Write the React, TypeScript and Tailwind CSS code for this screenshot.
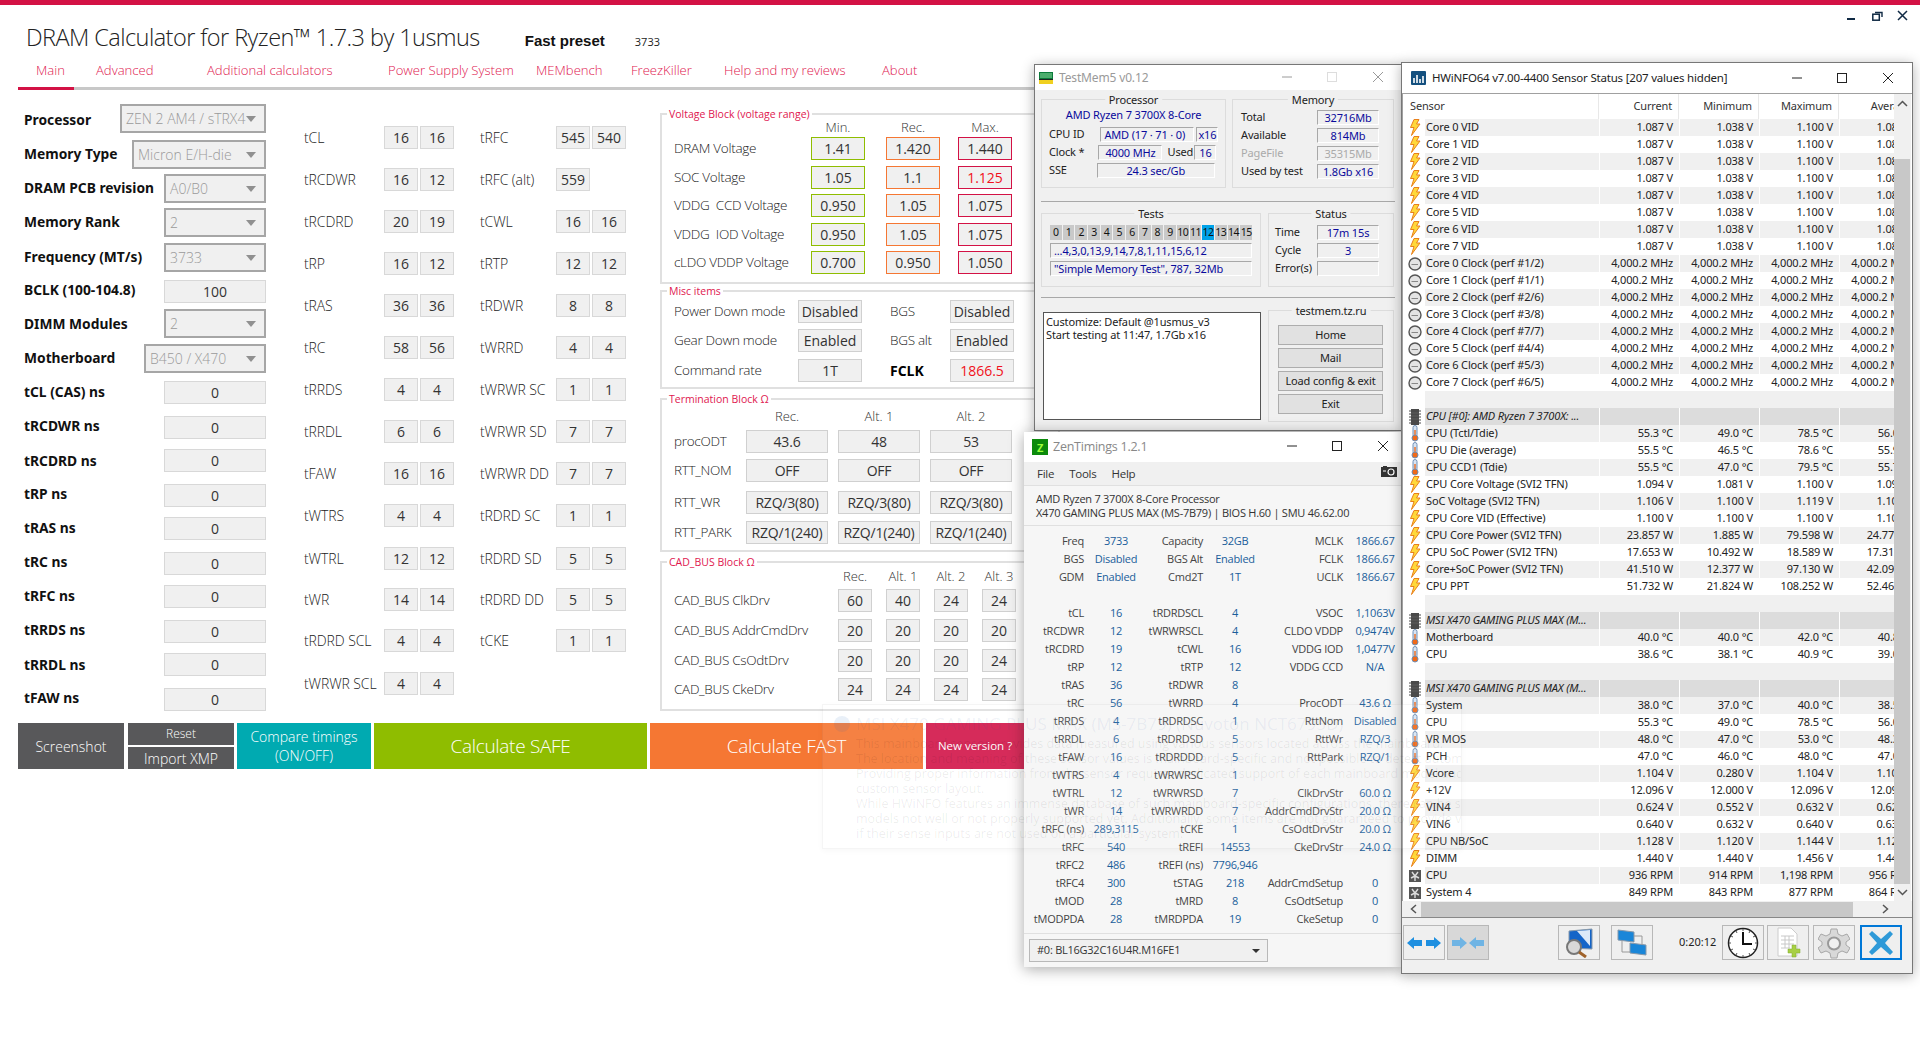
import React from "react";

const UI = "font-['Open_Sans','Noto_Sans',sans-serif]";

function Sel({ w, children }: { w: string; children: string }) {
  return (
    <div className={`h-[29px] ${w} flex items-center justify-between border-2 border-[#a6a6a6] bg-[#f0f0f0] pl-[4px] pr-[8px] text-[14px] text-[#9a9a9a] font-light`}>
      <span className="whitespace-nowrap">{children}</span>
      <span className="w-0 h-0 border-l-[5px] border-r-[5px] border-t-[6px] border-l-transparent border-r-transparent border-t-[#909090]" />
    </div>
  );
}

function Inp({ children }: { children: string }) {
  return (
    <div className="h-[23px] w-[102px] flex items-center justify-center border border-[#d8d8d8] bg-[#f0f0f0] text-[14px] text-[#333]">
      {children}
    </div>
  );
}

const leftRows: { label: string; type: "s" | "i"; value: string; w: string; mt: string; lmt: string }[] = [
  { label: "Processor", type: "s", value: "ZEN 2 AM4 / sTRX4", w: "w-[146px]", mt: "mt-0", lmt: "translate-y-[2px]" },
  { label: "Memory Type", type: "s", value: "Micron E/H-die", w: "w-[134px]", mt: "mt-[7px]", lmt: "translate-y-0" },
  { label: "DRAM PCB revision", type: "s", value: "A0/B0", w: "w-[102px]", mt: "mt-[5px]", lmt: "translate-y-0" },
  { label: "Memory Rank", type: "s", value: "2", w: "w-[102px]", mt: "mt-[5px]", lmt: "translate-y-0" },
  { label: "Frequency (MT/s)", type: "s", value: "3733", w: "w-[102px]", mt: "mt-[6px]", lmt: "translate-y-0" },
  { label: "BCLK (100-104.8)", type: "i", value: "100", w: "w-[102px]", mt: "mt-[8px]", lmt: "-translate-y-[1px]" },
  { label: "DIMM Modules", type: "s", value: "2", w: "w-[102px]", mt: "mt-[6px]", lmt: "translate-y-[1px]" },
  { label: "Motherboard", type: "s", value: "B450 / X470", w: "w-[122px]", mt: "mt-[6px]", lmt: "translate-y-0" },
  { label: "tCL (CAS) ns", type: "i", value: "0", w: "w-[102px]", mt: "mt-[8px]", lmt: "translate-y-0" },
  { label: "tRCDWR ns", type: "i", value: "0", w: "w-[102px]", mt: "mt-[12px]", lmt: "-translate-y-[1px]" },
  { label: "tRCDRD ns", type: "i", value: "0", w: "w-[102px]", mt: "mt-[10px]", lmt: "translate-y-[1px]" },
  { label: "tRP ns", type: "i", value: "0", w: "w-[102px]", mt: "mt-[12px]", lmt: "-translate-y-[1px]" },
  { label: "tRAS ns", type: "i", value: "0", w: "w-[102px]", mt: "mt-[10px]", lmt: "translate-y-0" },
  { label: "tRC ns", type: "i", value: "0", w: "w-[102px]", mt: "mt-[12px]", lmt: "-translate-y-[1px]" },
  { label: "tRFC ns", type: "i", value: "0", w: "w-[102px]", mt: "mt-[10px]", lmt: "translate-y-0" },
  { label: "tRRDS ns", type: "i", value: "0", w: "w-[102px]", mt: "mt-[12px]", lmt: "-translate-y-[1px]" },
  { label: "tRRDL ns", type: "i", value: "0", w: "w-[102px]", mt: "mt-[10px]", lmt: "translate-y-[1px]" },
  { label: "tFAW ns", type: "i", value: "0", w: "w-[102px]", mt: "mt-[12px]", lmt: "-translate-y-[1px]" },
];

function LeftColumn() {
  return (
    <div className="w-[242px] ml-[24px] flex flex-col shrink-0">
      {leftRows.map((r) => (
        <div key={r.label} className={`flex items-center justify-between ${r.mt}`}>
          <span className={`text-[13.8px] font-bold text-[#111] font-['Noto_Sans',sans-serif] whitespace-nowrap ${r.lmt}`}>{r.label}</span>
          {r.type === "s" ? <Sel w={r.w}>{r.value}</Sel> : <Inp>{r.value}</Inp>}
        </div>
      ))}
    </div>
  );
}

function TBox({ children }: { children: string }) {
  return (
    <div className="w-[34px] h-[23px] flex items-center justify-center border border-[#d8d8d8] bg-[#f0f0f0] text-[14px] text-[#333]">
      {children}
    </div>
  );
}

const tRows: { mt: string; a: [string, string, string]; b?: [string, string, string?] }[] = [
  { mt: "mt-0", a: ["tCL", "16", "16"], b: ["tRFC", "545", "540"] },
  { mt: "mt-[19px]", a: ["tRCDWR", "16", "12"], b: ["tRFC (alt)", "559"] },
  { mt: "mt-[19px]", a: ["tRCDRD", "20", "19"], b: ["tCWL", "16", "16"] },
  { mt: "mt-[19px]", a: ["tRP", "16", "12"], b: ["tRTP", "12", "12"] },
  { mt: "mt-[19px]", a: ["tRAS", "36", "36"], b: ["tRDWR", "8", "8"] },
  { mt: "mt-[19px]", a: ["tRC", "58", "56"], b: ["tWRRD", "4", "4"] },
  { mt: "mt-[19px]", a: ["tRRDS", "4", "4"], b: ["tWRWR SC", "1", "1"] },
  { mt: "mt-[19px]", a: ["tRRDL", "6", "6"], b: ["tWRWR SD", "7", "7"] },
  { mt: "mt-[19px]", a: ["tFAW", "16", "16"], b: ["tWRWR DD", "7", "7"] },
  { mt: "mt-[19px]", a: ["tWTRS", "4", "4"], b: ["tRDRD SC", "1", "1"] },
  { mt: "mt-[20px]", a: ["tWTRL", "12", "12"], b: ["tRDRD SD", "5", "5"] },
  { mt: "mt-[18px]", a: ["tWR", "14", "14"], b: ["tRDRD DD", "5", "5"] },
  { mt: "mt-[18px]", a: ["tRDRD SCL", "4", "4"], b: ["tCKE", "1", "1"] },
  { mt: "mt-[20px]", a: ["tWRWR SCL", "4", "4"] },
];

function TPair({ t }: { t: [string, string, string?] }) {
  return (
    <>
      <span className="text-[14px] font-light text-[#222] whitespace-nowrap tracking-[-0.1px]">{t[0]}</span>
      <div className="flex gap-[2px]">
        <TBox>{t[1]}</TBox>
        {t[2] ? <TBox>{t[2]}</TBox> : null}
      </div>
    </>
  );
}

function TimingColumn() {
  return (
    <div className="ml-[38px] mt-[22px] flex flex-col w-[322px] shrink-0">
      {tRows.map((r) => (
        <div key={r.a[0]} className={`grid grid-cols-[80px_96px_76px_70px] items-center h-[23px] ${r.mt}`}>
          <TPair t={r.a} />
          {r.b ? <TPair t={r.b} /> : null}
        </div>
      ))}
    </div>
  );
}

function Group({ title, cls, children }: { title: string; cls: string; children: React.ReactNode }) {
  return (
    <div className={`relative border-2 border-[#e0e0e0] w-[400px] ${cls}`}>
      <span className="absolute left-[5px] -top-[8px] bg-white px-[2px] text-[10.5px] leading-[14px] text-[#e0174f] whitespace-nowrap">{title}</span>
      {children}
    </div>
  );
}

function VBox({ cls, children }: { cls: string; children: string }) {
  return <div className={`h-[23px] flex items-center justify-center bg-[#f0f0f0] border text-[14px] text-[#333] ${cls}`}>{children}</div>;
}

const LBL = "text-[13.5px] tracking-[-0.3px] font-light text-[#222] whitespace-pre";

const voltages: [string, string, string, string][] = [
  ["DRAM Voltage", "1.41", "1.420", "1.440"],
  ["SOC Voltage", "1.05", "1.1", "1.125"],
  ["VDDG  CCD Voltage", "0.950", "1.05", "1.075"],
  ["VDDG  IOD Voltage", "0.950", "1.05", "1.075"],
  ["cLDO VDDP Voltage", "0.700", "0.950", "1.050"],
];

function VoltageBlock() {
  return (
    <Group title="Voltage Block (voltage range)" cls="h-[171px] pt-[4px]">
      <div className="flex h-[17px] text-[13px] font-light text-[#333] items-center">
        <span className="ml-[149px] w-[54px] text-center">Min.</span>
        <span className="ml-[21px] w-[54px] text-center">Rec.</span>
        <span className="ml-[18px] w-[54px] text-center">Max.</span>
      </div>
      <div className="flex flex-col gap-[5.5px] mt-[1px]">
        {voltages.map((v) => (
          <div key={v[0]} className="flex items-center h-[23px]">
            <span className={`ml-[12px] w-[137px] ${LBL}`}>{v[0]}</span>
            <VBox cls="w-[54px] border-[#8fbd00]">{v[1]}</VBox>
            <VBox cls="ml-[21px] w-[54px] border-[#f57733]">{v[2]}</VBox>
            <VBox cls={`ml-[18px] w-[54px] border-[#d31245] ${v[3] === "1.125" ? "!text-[#f01020]" : ""}`}>{v[3]}</VBox>
          </div>
        ))}
      </div>
    </Group>
  );
}

function MiscBlock() {
  const rows: [string, string, string, string, string][] = [
    ["Power Down mode", "Disabled", "BGS", "Disabled", "mt-0"],
    ["Gear Down mode", "Enabled", "BGS alt", "Enabled", "mt-[6px]"],
    ["Command rate", "1T", "FCLK", "1866.5", "mt-[7px]"],
  ];
  return (
    <Group title="Misc items" cls="mt-[6px] h-[99px] pt-[8px]">
      {rows.map((r) => (
        <div key={r[0]} className={`flex items-center h-[23px] ${r[4]}`}>
          <span className={`ml-[12px] w-[124px] ${LBL}`}>{r[0]}</span>
          <div className="w-[64px] h-[23px] flex items-center justify-center bg-[#f0f0f0] border border-[#d0d0d0] text-[14px] text-[#333]">{r[1]}</div>
          <span className={`ml-[28px] w-[60px] ${r[2] === "FCLK" ? "text-[14px] font-bold text-black" : LBL}`}>{r[2]}</span>
          <div className={`w-[64px] h-[23px] flex items-center justify-center bg-[#f0f0f0] border border-[#d0d0d0] text-[14px] ${r[3] === "1866.5" ? "text-[#f01020]" : "text-[#333]"}`}>{r[3]}</div>
        </div>
      ))}
    </Group>
  );
}

function TermBlock() {
  const rows: [string, string, string][] = [
    ["procODT", "43.6|48|53", "mt-0"],
    ["RTT_NOM", "OFF|OFF|OFF", "mt-[6px]"],
    ["RTT_WR", "RZQ/3(80)|RZQ/3(80)|RZQ/3(80)", "mt-[9px]"],
    ["RTT_PARK", "RZQ/1(240)|RZQ/1(240)|RZQ/1(240)", "mt-[7px]"],
  ];
  return (
    <Group title="Termination Block Ω" cls="mt-[9px] h-[154px] pt-[8px]">
      <div className="flex h-[18px] items-center text-[13px] font-light text-[#333]">
        <span className="ml-[84px] w-[82px] text-center">Rec.</span>
        <span className="ml-[10px] w-[82px] text-center">Alt. 1</span>
        <span className="ml-[10px] w-[82px] text-center">Alt. 2</span>
      </div>
      <div className="mt-[4px]">
        {rows.map((r) => (
          <div key={r[0]} className={`flex items-center h-[23px] ${r[2]}`}>
            <span className={`ml-[12px] w-[72px] ${LBL}`}>{r[0]}</span>
            <div className="flex gap-[10px]">
              {r[1].split("|").map((v, i) => (
                <div key={i} className="w-[82px] h-[23px] flex items-center justify-center bg-[#f0f0f0] border border-[#d0d0d0] text-[14px] tracking-[-0.2px] text-[#333]">{v}</div>
              ))}
            </div>
          </div>
        ))}
      </div>
    </Group>
  );
}

function CadBlock() {
  const rows: [string, string[], string][] = [
    ["CAD_BUS ClkDrv", ["60", "40", "24", "24"], "mt-0"],
    ["CAD_BUS AddrCmdDrv", ["20", "20", "20", "20"], "mt-[7px]"],
    ["CAD_BUS CsOdtDrv", ["20", "20", "20", "24"], "mt-[7px]"],
    ["CAD_BUS CkeDrv", ["24", "24", "24", "24"], "mt-[6px]"],
  ];
  return (
    <Group title="CAD_BUS Block Ω" cls="mt-[9px] h-[150px] pt-[5px]">
      <div className="flex h-[18px] items-center text-[13px] font-light text-[#333] whitespace-nowrap">
        <span className="ml-[176px] w-[34px] text-center">Rec.</span>
        <span className="ml-[14px] w-[34px] text-center">Alt. 1</span>
        <span className="ml-[14px] w-[34px] text-center">Alt. 2</span>
        <span className="ml-[14px] w-[34px] text-center">Alt. 3</span>
      </div>
      <div className="mt-[3px]">
        {rows.map((r) => (
          <div key={r[0]} className={`flex items-center h-[23px] ${r[2]}`}>
            <span className={`ml-[12px] w-[164px] ${LBL}`}>{r[0]}</span>
            <div className="flex gap-[14px]">
              {r[1].map((v, i) => (
                <div key={i} className="w-[34px] h-[23px] flex items-center justify-center bg-[#f0f0f0] border border-[#d0d0d0] text-[14px] text-[#333]">{v}</div>
              ))}
            </div>
          </div>
        ))}
      </div>
    </Group>
  );
}

function ActionBar() {
  return (
    <div className="flex h-[46px] ml-[18px] mt-[12px] text-white font-light">
      <div className="w-[106px] bg-[#58585a] flex items-center justify-center text-[14px]">Screenshot</div>
      <div className="ml-[4px] w-[106px] flex flex-col justify-between">
        <div className="h-[22px] bg-[#58585a] flex items-center justify-center text-[12px]">Reset</div>
        <div className="h-[22px] bg-[#58585a] flex items-center justify-center text-[14px]">Import XMP</div>
      </div>
      <div className="ml-[3px] w-[134px] bg-[#00aab1] flex flex-col items-center justify-center text-[14px] leading-[19px]">
        <span>Compare timings</span>
        <span>(ON/OFF)</span>
      </div>
      <div className="ml-[3px] w-[273px] bg-[#8fbd00] flex items-center justify-center text-[19px] tracking-[-0.3px]">Calculate SAFE</div>
      <div className="ml-[3px] w-[273px] bg-[#f57733] flex items-center justify-center text-[19px] tracking-[-0.3px]">Calculate FAST</div>
      <div className="ml-[3px] w-[98px] bg-[#d31a4c] flex items-center justify-center text-[11.5px] font-normal">New version ?</div>
    </div>
  );
}

const tabs: [string, string][] = [
  ["Main", "ml-[36px] w-[60px]"],
  ["Advanced", "w-[111px]"],
  ["Additional calculators", "w-[181px]"],
  ["Power Supply System", "w-[148px]"],
  ["MEMbench", "w-[95px]"],
  ["FreezKiller", "w-[93px]"],
  ["Help and my reviews", "w-[158px]"],
  ["About", "w-[50px]"],
];

function MainApp() {
  return (
    <div className={`${UI} w-[1920px]`}>
      <div className="h-[5px] bg-[#d31245]" />
      <div className="flex items-baseline h-[50px] pl-[26px] pt-[16px]">
        <span className="text-[23.5px] tracking-[-0.55px] leading-[32px] font-light text-[#222] whitespace-nowrap">DRAM Calculator for Ryzen™ 1.7.3 by 1usmus</span>
        <span className="ml-[45px] text-[15px] font-bold text-[#111] font-['Liberation_Sans',sans-serif]">Fast preset</span>
        <span className="ml-[30px] text-[11px] text-[#222]">3733</span>
      </div>
      <div className="flex h-[32px] items-center text-[13.1px] font-light text-[#e0174f]">
        {tabs.map((t) => (
          <span key={t[0]} className={`${t[1]} whitespace-nowrap`}>{t[0]}</span>
        ))}
      </div>
      <div className="ml-[18px] w-[1022px] h-[3px] bg-[#c8c8c8] flex">
        <div className="w-[56px] h-[3px] bg-[#d31245]" />
      </div>
      <div className="flex mt-[14px]">
        <LeftColumn />
        <TimingColumn />
        <div className="ml-[34px] mt-[9px] flex flex-col">
          <VoltageBlock />
          <MiscBlock />
          <TermBlock />
          <CadBlock />
        </div>
      </div>
      <ActionBar />
    </div>
  );
}

function Group95({ title, cls, children }: { title: string; cls: string; children?: React.ReactNode }) {
  return (
    <div className={`relative border border-[#dcdcdc] shrink-0 ${cls}`}>
      <span className="absolute left-1/2 -translate-x-1/2 -top-[8px] bg-[#f0f0f0] px-[4px] text-[#222] leading-[15px] whitespace-nowrap">{title}</span>
      {children}
    </div>
  );
}

function Sunken({ cls, children }: { cls: string; children?: string }) {
  return (
    <div className={`h-[15px] flex items-center justify-center border border-t-[#a8a8a8] border-l-[#a8a8a8] border-r-white border-b-white text-[#0a0a9c] leading-none whitespace-nowrap ${cls}`}>
      {children}
    </div>
  );
}

function TmRow({ label, cls, children }: { label: string; cls?: string; children: React.ReactNode }) {
  return (
    <div className="flex items-center h-[15px] mb-[3px]">
      <span className={`whitespace-nowrap ${cls ?? "text-[#222]"}`}>{label}</span>
      {children}
    </div>
  );
}

function WinCtl({ dim, cls }: { dim?: boolean; cls?: string }) {
  const c = dim ? "#9a9a9a" : "#222";
  return (
    <div className={`flex items-center ${cls ?? ""}`}>
      <svg width="12" height="12" viewBox="0 0 12 12"><path d="M1 6H11" stroke={c} strokeWidth="1" /></svg>
      <svg className="ml-[33px]" width="12" height="12" viewBox="0 0 12 12"><rect x="1.5" y="1.5" width="9" height="9" fill="none" stroke={dim ? "#ddd" : c} strokeWidth="1" /></svg>
      <svg className="ml-[34px]" width="12" height="12" viewBox="0 0 12 12"><path d="M1 1L11 11M11 1L1 11" stroke={c} strokeWidth="1" /></svg>
    </div>
  );
}

function TestMem() {
  const cells = Array.from({ length: 16 }, (_, i) => i);
  return (
    <div className="absolute left-[1034px] top-[64px] w-[368px] h-[367px] bg-[#f0f0f0] border border-[#777] shadow-[0_2px_12px_rgba(0,0,0,0.3)] font-['Noto_Sans',sans-serif] text-[11px] tracking-[-0.15px]">
      <div className="h-[25px] bg-white flex items-center pl-[4px] relative">
        <svg width="14" height="12" viewBox="0 0 14 12">
          <rect x="0" y="0" width="14" height="7" fill="#0b7a3a" />
          <path d="M2 1V6M4 1V6M6 1V6M8 1V6M10 1V6M12 1V6" stroke="#8fe0a0" strokeWidth="1" />
          <rect x="0" y="7" width="14" height="5" fill="#f0d020" />
          <rect x="0" y="7" width="14" height="1" fill="#222" />
        </svg>
        <span className="ml-[6px] text-[12px] text-[#9a9a9a]">TestMem5 v0.12</span>
        <WinCtl dim cls="absolute right-[17px] top-[6px]" />
      </div>
      <div className="flex pl-[6px] pt-[9px] gap-[6px]">
        <Group95 title="Processor" cls="w-[185px] h-[89px] pl-[7px]">
          <div className="text-center text-[#0a0a9c] mt-[7px] h-[17px] -ml-[7px]">AMD Ryzen 7 3700X 8-Core</div>
          <div className="mt-[3px]">
            <TmRow label="CPU ID">
              <Sunken cls="ml-[16px] w-[94px] !justify-start pl-[3px]">AMD  (17 · 71 · 0)</Sunken>
              <Sunken cls="ml-[2px] w-[22px]">x16</Sunken>
            </TmRow>
            <TmRow label="Clock *">
              <Sunken cls="ml-[14px] w-[64px]">4000 MHz</Sunken>
              <span className="ml-[5px] w-[27px] text-[#222]">Used</span>
              <Sunken cls="w-[22px]">16</Sunken>
            </TmRow>
            <TmRow label="SSE">
              <Sunken cls="ml-[30px] w-[118px]">24.3 sec/Gb</Sunken>
            </TmRow>
          </div>
        </Group95>
        <Group95 title="Memory" cls="w-[162px] h-[89px] pl-[8px] pt-[10px]">
          <TmRow label="Total"><span className="ml-auto" /><Sunken cls="mr-[14px] w-[62px]">32716Mb</Sunken></TmRow>
          <TmRow label="Available"><span className="ml-auto" /><Sunken cls="mr-[14px] w-[62px]">814Mb</Sunken></TmRow>
          <TmRow label="PageFile" cls="text-[#aaa]"><span className="ml-auto" /><Sunken cls="mr-[14px] w-[62px] !text-[#aaa]">35315Mb</Sunken></TmRow>
          <TmRow label="Used by test"><span className="ml-auto" /><Sunken cls="mr-[14px] w-[62px]">1.8Gb x16</Sunken></TmRow>
        </Group95>
      </div>
      <div className="mx-[6px] mt-[13px] h-[2px] border-t border-[#a8a8a8] border-b-white" />
      <div className="flex pl-[6px] mt-[10px] gap-[7px]">
        <Group95 title="Tests" cls="w-[220px] h-[74px] pl-[8px] pt-[11px]">
          <div className="flex gap-px w-[202px]">
            {cells.map((i) => (
              <div key={i} className={`w-[11.7px] h-[15px] flex items-center justify-center text-[10.5px] tracking-[-0.5px] leading-none ${i === 12 ? "bg-[#00a2e8]" : "bg-[#c9c9c9]"} text-[#111]`}>{i}</div>
            ))}
          </div>
          <Sunken cls="mt-[3px] w-[202px] !justify-start pl-[3px]">...4,3,0,13,9,14,7,8,1,11,15,6,12</Sunken>
          <Sunken cls="mt-[3px] w-[202px] !justify-start pl-[3px]">{'"Simple Memory Test", 787, 32Mb'}</Sunken>
        </Group95>
        <Group95 title="Status" cls="w-[126px] h-[74px] pl-[6px] pt-[11px]">
          <TmRow label="Time"><span className="ml-auto" /><Sunken cls="mr-[14px] w-[62px]">17m 15s</Sunken></TmRow>
          <TmRow label="Cycle"><span className="ml-auto" /><Sunken cls="mr-[14px] w-[62px]">3</Sunken></TmRow>
          <TmRow label="Error(s)"><span className="ml-auto" /><Sunken cls="mr-[14px] w-[62px]" /></TmRow>
        </Group95>
      </div>
      <div className="mx-[6px] mt-[10px] h-[2px] border-t border-[#a8a8a8]" />
      <div className="flex pl-[8px] mt-[13px] gap-[7px]">
        <div className="w-[218px] h-[108px] bg-white border border-[#555] pl-[2px] pt-[2px] text-[#222] leading-[13px] shrink-0">
          <div>Customize: Default @1usmus_v3</div>
          <div>Start testing at 11:47, 1.7Gb x16</div>
        </div>
        <Group95 title="testmem.tz.ru" cls="w-[126px] h-[112px] -mt-[2px] pl-[9px] pt-[14px]">
          <div className="flex flex-col gap-[3px]">
            {["Home", "Mail", "Load config & exit", "Exit"].map((b) => (
              <div key={b} className="w-[105px] h-[20px] flex items-center justify-center bg-[#e1e1e1] border border-[#adadad] text-[#222]">{b}</div>
            ))}
          </div>
        </Group95>
      </div>
    </div>
  );
}

const zenTop: [string, string, string, string, string, string][] = [
  ["Freq", "3733", "Capacity", "32GB", "MCLK", "1866.67"],
  ["BGS", "Disabled", "BGS Alt", "Enabled", "FCLK", "1866.67"],
  ["GDM", "Enabled", "Cmd2T", "1T", "UCLK", "1866.67"],
  ["", "", "", "", "", ""],
  ["tCL", "16", "tRDRDSCL", "4", "VSOC", "1,1063V"],
  ["tRCDWR", "12", "tWRWRSCL", "4", "CLDO VDDP", "0,9474V"],
  ["tRCDRD", "19", "tCWL", "16", "VDDG IOD", "1,0477V"],
  ["tRP", "12", "tRTP", "12", "VDDG CCD", "N/A"],
  ["tRAS", "36", "tRDWR", "8", "", ""],
  ["tRC", "56", "tWRRD", "4", "ProcODT", "43.6 Ω"],
  ["tRRDS", "4", "tRDRDSC", "1", "RttNom", "Disabled"],
  ["tRRDL", "6", "tRDRDSD", "5", "RttWr", "RZQ/3"],
  ["tFAW", "16", "tRDRDDD", "5", "RttPark", "RZQ/1"],
  ["tWTRS", "4", "tWRWRSC", "1", "", ""],
  ["tWTRL", "12", "tWRWRSD", "7", "ClkDrvStr", "60.0 Ω"],
  ["tWR", "14", "tWRWRDD", "7", "AddrCmdDrvStr", "20.0 Ω"],
  ["tRFC (ns)", "289,3115", "tCKE", "1", "CsOdtDrvStr", "20.0 Ω"],
  ["tRFC", "540", "tREFI", "14553", "CkeDrvStr", "24.0 Ω"],
  ["tRFC2", "486", "tREFI (ns)", "7796,946", "", ""],
  ["tRFC4", "300", "tSTAG", "218", "AddrCmdSetup", "0"],
  ["tMOD", "28", "tMRD", "8", "CsOdtSetup", "0"],
  ["tMODPDA", "28", "tMRDPDA", "19", "CkeSetup", "0"],
];

function ZenTimings() {
  return (
    <div className="absolute left-[1024px] top-[432px] w-[377px] h-[535px] bg-[#f6f6f6] shadow-[0_2px_14px_rgba(0,0,0,0.35)] font-['Open_Sans',sans-serif] text-[11px] tracking-[-0.25px] text-[#444] overflow-hidden">
      <div className="h-[30px] bg-white flex items-center pl-[8px] relative">
        <div className="w-[16px] h-[16px] bg-[#0b8a0b] flex items-center justify-center text-[#9cff3a] text-[11px] font-bold leading-none">Z</div>
        <span className="ml-[5px] text-[12.5px] text-[#888]">ZenTimings 1.2.1</span>
        <WinCtl cls="absolute right-[12px] top-[8px]" />
      </div>
      <div className="h-[24px] bg-[#f0f0f0] border-b border-[#e0e0e0] flex items-center pl-[13px] text-[11.5px] text-[#333] relative">
        <span>File</span>
        <span className="ml-[15px]">Tools</span>
        <span className="ml-[15px]">Help</span>
        <svg className="absolute right-[4px] top-[3px]" width="16" height="12" viewBox="0 0 16 12">
          <path d="M0 2H2V1H6V2H16V12H0Z" fill="#333" />
          <circle cx="10" cy="7" r="3" fill="none" stroke="#fff" strokeWidth="1.2" />
          <path d="M2 6H5" stroke="#fff" strokeWidth="1" />
        </svg>
      </div>
      <div className="h-[40px] border-b border-[#e0e0e0] pl-[12px] pt-[6px] leading-[14px] text-[#333]">
        <div>AMD Ryzen 7 3700X 8-Core Processor</div>
        <div className="whitespace-nowrap">X470 GAMING PLUS MAX (MS-7B79) | BIOS H.60 | SMU 46.62.00</div>
      </div>
      <div className="grid grid-cols-[60px_64px_55px_64px_76px_64px] auto-rows-[18px] pt-[6px] h-[407px]">
        {zenTop.flatMap((r, i) =>
          r.map((c, j) => (
            <div key={`${i}-${j}`} className={`flex items-center whitespace-nowrap ${j % 2 === 0 ? "justify-end" : "justify-center text-[#1b5e9b]"}`}>{c}</div>
          ))
        )}
      </div>
      <div className="border-t border-[#e0e0e0] h-[34px] pl-[5px] pt-[5px] bg-[#f6f6f6]">
        <div className="w-[239px] h-[23px] border border-[#b8b8b8] bg-[#f0f0f0] flex items-center justify-between pl-[7px] pr-[7px] text-[#333]">
          <span>#0: BL16G32C16U4R.M16FE1</span>
          <span className="w-0 h-0 border-l-[4px] border-r-[4px] border-t-[4px] border-l-transparent border-r-transparent border-t-[#333]" />
        </div>
      </div>
    </div>
  );
}

function Bolt() {
  return (
    <svg width="14" height="17" viewBox="0 0 14 17">
      <path d="M6 0.5H11L8.5 5H12L3.5 16.5L6 8.5H2.5Z" fill="#ffd83a" stroke="#e8801c" strokeWidth="1" strokeLinejoin="round" />
    </svg>
  );
}
function ClockI() {
  return (
    <svg width="14" height="14" viewBox="0 0 14 14">
      <circle cx="7" cy="7" r="6" fill="#e4e4e4" stroke="#555" strokeWidth="1.4" />
      <path d="M3.5 7.5H10" stroke="#888" strokeWidth="1" />
    </svg>
  );
}
function Thermo() {
  return (
    <svg width="12" height="17" viewBox="0 0 12 17">
      <rect x="4" y="0.5" width="4" height="11" rx="2" fill="#d8e4f2" stroke="#6f8fb5" strokeWidth="1" />
      <rect x="5.3" y="5" width="1.4" height="7" fill="#ef6a1a" />
      <circle cx="6" cy="13" r="3" fill="#ef6a1a" stroke="#6f8fb5" strokeWidth="1" />
    </svg>
  );
}
function Chip() {
  return (
    <svg width="12" height="16" viewBox="0 0 12 16">
      <rect x="2" y="0" width="8" height="16" fill="#4a4a4a" />
      <path d="M0 2H12M0 5H12M0 8H12M0 11H12M0 14H12" stroke="#4a4a4a" strokeWidth="1.2" />
      <path d="M2 4H10M2 7H10M2 10H10" stroke="#6a6a6a" strokeWidth="0.6" />
    </svg>
  );
}
function FanI() {
  return (
    <svg width="12" height="12" viewBox="0 0 12 12">
      <rect width="12" height="12" fill="#555" />
      <path d="M6 6L3 2M6 6L9 2M6 6L2 8M6 6L10 8M6 6V11" stroke="#ddd" strokeWidth="1.4" />
    </svg>
  );
}

type HwRow =
  | { k: "blank" }
  | { k: "sec"; name: string }
  | { k: "v"; i: "b" | "c" | "t" | "f"; name: string; v: [string, string, string, string] };

const V = (name: string, a: string, b: string, c: string, d: string): HwRow => ({ k: "v", i: "b", name, v: [a, b, c, d] });
const T = (name: string, a: string, b: string, c: string, d: string): HwRow => ({ k: "v", i: "t", name, v: [a, b, c, d] });

const hwRows: HwRow[] = [
  ...[0, 1, 2, 3, 4, 5, 6, 7].map((n) => V(`Core ${n} VID`, "1.087 V", "1.038 V", "1.100 V", "1.087 V")),
  ...(["1/2", "1/1", "2/6", "3/8", "7/7", "4/4", "5/3", "6/5"]).map((p, n): HwRow => ({ k: "v", i: "c", name: `Core ${n} Clock (perf #${p})`, v: ["4,000.2 MHz", "4,000.2 MHz", "4,000.2 MHz", "4,000.2 MHz"] })),
  { k: "blank" },
  { k: "sec", name: "CPU [#0]: AMD Ryzen 7 3700X: ..." },
  T("CPU (Tctl/Tdie)", "55.3 °C", "49.0 °C", "78.5 °C", "56.0 °C"),
  T("CPU Die (average)", "55.5 °C", "46.5 °C", "78.6 °C", "55.9 °C"),
  T("CPU CCD1 (Tdie)", "55.5 °C", "47.0 °C", "79.5 °C", "55.7 °C"),
  V("CPU Core Voltage (SVI2 TFN)", "1.094 V", "1.081 V", "1.100 V", "1.094 V"),
  V("SoC Voltage (SVI2 TFN)", "1.106 V", "1.100 V", "1.119 V", "1.106 V"),
  V("CPU Core VID (Effective)", "1.100 V", "1.100 V", "1.100 V", "1.100 V"),
  V("CPU Core Power (SVI2 TFN)", "23.857 W", "1.885 W", "79.598 W", "24.778 W"),
  V("CPU SoC Power (SVI2 TFN)", "17.653 W", "10.492 W", "18.589 W", "17.312 W"),
  V("Core+SoC Power (SVI2 TFN)", "41.510 W", "12.377 W", "97.130 W", "42.090 W"),
  V("CPU PPT", "51.732 W", "21.824 W", "108.252 W", "52.460 W"),
  { k: "blank" },
  { k: "sec", name: "MSI X470 GAMING PLUS MAX (M..." },
  T("Motherboard", "40.0 °C", "40.0 °C", "42.0 °C", "40.8 °C"),
  T("CPU", "38.6 °C", "38.1 °C", "40.9 °C", "39.0 °C"),
  { k: "blank" },
  { k: "sec", name: "MSI X470 GAMING PLUS MAX (M..." },
  T("System", "38.0 °C", "37.0 °C", "40.0 °C", "38.5 °C"),
  T("CPU", "55.3 °C", "49.0 °C", "78.5 °C", "56.0 °C"),
  T("VR MOS", "48.0 °C", "47.0 °C", "53.0 °C", "48.3 °C"),
  T("PCH", "47.0 °C", "46.0 °C", "48.0 °C", "47.0 °C"),
  V("Vcore", "1.104 V", "0.280 V", "1.104 V", "1.100 V"),
  V("+12V", "12.096 V", "12.000 V", "12.096 V", "12.096 V"),
  V("VIN4", "0.624 V", "0.552 V", "0.632 V", "0.624 V"),
  V("VIN6", "0.640 V", "0.632 V", "0.640 V", "0.632 V"),
  V("CPU NB/SoC", "1.128 V", "1.120 V", "1.144 V", "1.128 V"),
  V("DIMM", "1.440 V", "1.440 V", "1.456 V", "1.440 V"),
  { k: "v", i: "f", name: "CPU", v: ["936 RPM", "914 RPM", "1,198 RPM", "956 RPM"] },
  { k: "v", i: "f", name: "System 4", v: ["849 RPM", "843 RPM", "877 RPM", "864 RPM"] },
];

function HwTable() {
  return (
    <div className="w-[490px] h-[807px] overflow-hidden ml-[1px] shrink-0 text-[#222] text-[11px] tracking-[-0.15px]">
      <div className="flex h-[25px] items-center text-[#333]">
        <span className="w-[195px] shrink-0 pl-[6px] border-r border-[#e8e8e8] h-[25px] flex items-center">Sensor</span>
        {["Current", "Minimum", "Maximum", "Average"].map((h) => (
          <span key={h} className="w-[80px] shrink-0 pr-[6px] text-right border-r border-[#e8e8e8] h-[25px] flex items-center justify-end">{h}</span>
        ))}
      </div>
      {hwRows.map((r, idx) => {
        const gray = idx % 2 === 0;
        if (r.k === "blank") {
          return (
            <div key={idx} className="flex h-[17px]">
              <div className="w-[21px] bg-white" />
              <div className="flex-1 bg-[#f0f0f0]" />
            </div>
          );
        }
        if (r.k === "sec") {
          return (
            <div key={idx} className="flex h-[17px]">
              <div className="w-[21px] shrink-0 bg-white flex items-center justify-center"><Chip /></div>
              <div className="w-[174px] shrink-0 bg-[#dcdcdc] pl-[1px] italic whitespace-nowrap overflow-hidden flex items-center">{r.name}</div>
              {[0, 1, 2, 3].map((c) => <div key={c} className="w-[80px] shrink-0 bg-[#dcdcdc] border-l border-white" />)}
            </div>
          );
        }
        return (
          <div key={idx} className="flex h-[17px]">
            <div className="w-[21px] shrink-0 bg-white flex items-center justify-center">
              {r.i === "b" ? <Bolt /> : r.i === "c" ? <ClockI /> : r.i === "t" ? <Thermo /> : <FanI />}
            </div>
            <div className={`w-[174px] shrink-0 pl-[1px] flex items-center whitespace-nowrap ${gray ? "bg-[#f0f0f0]" : "bg-white"}`}>{r.name}</div>
            {r.v.map((c, j) => (
              <div key={j} className={`w-[80px] shrink-0 pr-[6px] flex items-center justify-end whitespace-nowrap border-l border-white ${gray ? "bg-[#f0f0f0]" : "bg-white"}`}>{c}</div>
            ))}
          </div>
        );
      })}
    </div>
  );
}

function TB({ cls, children }: { cls?: string; children: React.ReactNode }) {
  return <div className={`w-[42px] h-[35px] flex items-center justify-center border border-[#b8b8b8] bg-[#efefef] ${cls ?? ""}`}>{children}</div>;
}

function HwToolbar() {
  return (
    <div className="h-[52px] bg-[#f0f0f0] flex items-start pt-[7px] pl-[1px]">
      <TB>
        <svg width="34" height="18" viewBox="0 0 34 18">
          <path d="M0 9L7 3V6H15V12H7V15Z" fill="#1e8fe0" />
          <path d="M34 9L27 3V6H19V12H27V15Z" fill="#1e8fe0" />
        </svg>
      </TB>
      <TB cls="ml-[2px] !bg-[#d8d8d8]">
        <svg width="34" height="18" viewBox="0 0 34 18">
          <path d="M16 9L9 3V6H1V12H9V15Z" fill="#6fb4e4" />
          <path d="M18 9L25 3V6H33V12H25V15Z" fill="#6fb4e4" />
        </svg>
      </TB>
      <TB cls="ml-[69px]">
        <svg width="32" height="30" viewBox="0 0 32 30">
          <path d="M6 3L29 1V21L6 20Z" fill="#1565c8" stroke="#8899aa" />
          <path d="M14 3L27 2V18Z" fill="#dce9f8" />
          <circle cx="11" cy="19" r="7" fill="#d8d8d8" stroke="#777" strokeWidth="2" />
          <path d="M16 24L23 29" stroke="#a0632a" strokeWidth="3" />
        </svg>
      </TB>
      <TB cls="ml-[11px]">
        <svg width="32" height="30" viewBox="0 0 32 30">
          <path d="M2 2L18 4V14L2 12Z" fill="#1a86d8" stroke="#8899aa" />
          <path d="M14 15L30 17V27L14 25Z" fill="#1a86d8" stroke="#8899aa" />
          <path d="M18 8H26V17M6 13V24H14" fill="none" stroke="#999" />
        </svg>
      </TB>
      <span className="ml-[26px] mt-[11px] text-[11px] text-[#222] w-[43px] leading-none">0:20:12</span>
      <TB>
        <svg width="32" height="32" viewBox="0 0 32 32">
          <circle cx="16" cy="16" r="14.5" fill="#fff" stroke="#222" strokeWidth="1.5" />
          <path d="M16 5V17H25" fill="none" stroke="#111" strokeWidth="2" />
          <path d="M16 2V4M16 28V30M2 16H4M28 16H30M9 4L10 6M23 4L22 6M4 9L6 10M28 9L26 10M4 23L6 22M28 23L26 22M9 28L10 26M23 28L22 26" stroke="#555" strokeWidth="1" />
        </svg>
      </TB>
      <TB cls="ml-[3px]">
        <svg width="28" height="32" viewBox="0 0 28 32">
          <path d="M4 1H17L23 7V29H4Z" fill="#fff" stroke="#ccc" />
          <path d="M7 9H20M7 13H20M7 17H20M7 21H16M11 9V21M15 9V21" stroke="#c8c8c8" strokeWidth="1" />
          <path d="M18 18H22V22H26V26H22V30H18V26H14V22H18Z" fill="#a8cf45" stroke="#7fa82e" strokeWidth="0.5" />
        </svg>
      </TB>
      <TB cls="ml-[4px]">
        <svg width="32" height="32" viewBox="0 0 32 32">
          <path d="M13 2H19L20 7L24 9L29 7L32 12L28 15V18L32 21L29 26L24 24L20 26L19 31H13L12 26L8 24L3 26L0 21L4 18V15L0 12L3 7L8 9L12 7Z" fill="#d8d8d8" stroke="#a8a8a8" />
          <circle cx="16" cy="16.5" r="6" fill="#f0f0f0" stroke="#999" strokeWidth="2" />
        </svg>
      </TB>
      <TB cls="ml-[5px] !border-2 !border-[#0078d7]">
        <svg width="24" height="24" viewBox="0 0 24 24">
          <path d="M3 0L12 8L21 0L24 3L16 12L24 21L21 24L12 16L3 24L0 21L8 12L0 3Z" fill="#2f9ad8" />
        </svg>
      </TB>
    </div>
  );
}

function HwInfo() {
  return (
    <div className="absolute left-[1401px] top-[62px] w-[512px] h-[912px] bg-[#f0f0f0] border border-[#777] shadow-[0_2px_12px_rgba(0,0,0,0.3)] font-['Noto_Sans',sans-serif] overflow-hidden flex flex-col">
      <div className="h-[30px] shrink-0 bg-white flex items-center pl-[9px] relative">
        <svg width="15" height="14" viewBox="0 0 15 14">
          <rect width="15" height="14" rx="1" fill="#14507f" />
          <path d="M3 12V7M6 12V4M9 12V8M12 12V5" stroke="#fff" strokeWidth="1.6" />
        </svg>
        <span className="ml-[6px] text-[11.5px] tracking-[-0.2px] text-[#222] whitespace-nowrap">HWiNFO64 v7.00-4400 Sensor Status [207 values hidden]</span>
        <WinCtl cls="absolute right-[18px] top-[9px]" />
      </div>
      <div className="h-[1px] bg-[#a0a0a0] shrink-0" />
      <div className="flex bg-white shrink-0 border-l border-[#a0a0a0]">
        <HwTable />
        <div className="w-[17px] h-[807px] bg-[#f0f0f0] relative shrink-0">
          <svg className="absolute left-[3px] top-[6px]" width="11" height="7" viewBox="0 0 11 7"><path d="M1 6L5.5 1.5L10 6" fill="none" stroke="#555" strokeWidth="1.5" /></svg>
          <div className="absolute left-0 top-[65px] w-[16px] h-[725px] bg-[#c8c8c8]" />
          <svg className="absolute left-[3px] bottom-[5px]" width="11" height="7" viewBox="0 0 11 7"><path d="M1 1L5.5 5.5L10 1" fill="none" stroke="#555" strokeWidth="1.5" /></svg>
        </div>
      </div>
      <div className="h-[17px] bg-[#f0f0f0] flex items-center pl-[8px] shrink-0 border-b border-[#888]">
        <svg width="7" height="10" viewBox="0 0 7 10"><path d="M6 1L1.5 5L6 9" fill="none" stroke="#555" strokeWidth="1.5" /></svg>
        <div className="ml-[4px] w-[432px] h-[15px] bg-[#c8c8c8]" />
        <svg className="ml-[29px]" width="7" height="10" viewBox="0 0 7 10"><path d="M1 1L5.5 5L1 9" fill="none" stroke="#555" strokeWidth="1.5" /></svg>
      </div>
      <HwToolbar />
    </div>
  );
}

function GhostPopup() {
  return (
    <div className="absolute left-[822px] top-[704px] w-[640px] h-[145px] bg-white/[0.08] border border-black/[0.04] shadow-[0_2px_6px_rgba(0,0,0,0.03)] font-['Open_Sans',sans-serif] pointer-events-none overflow-hidden">
      <div className="absolute left-[11px] top-[11px] w-[16px] h-[16px] rounded-full bg-[#2a6fb8]/[0.10]" />
      <div className="pl-[33px] pt-[8px] text-[17px] leading-[22px] text-[#2a4f9c]/[0.08] whitespace-nowrap">MSI X470 GAMING PLUS MAX (MS-7B79) (Nuvoton NCT6795D)</div>
      <div className="pl-[33px] pt-[1px] text-[12.5px] leading-[15px] text-black/[0.08] whitespace-nowrap">
        <div>This mainboard sensor provides data measured using various sensors located across the mainboard.</div>
        <div>The location and meaning of these sensor values is mainboard-specific and not possible to detect automatically</div>
        <div>Providing proper information from the sensor requires dedicated support of each mainboard model and its</div>
        <div>custom sensor layout.</div>
        <div>While HWiNFO features an immense database of such mainboard-specific configurations, there can be some</div>
        <div>models not well or not properly supported yet. Additionally, some items are not guaranteed to provide valid values</div>
        <div>if their sense inputs are not used on a particular system.</div>
      </div>
    </div>
  );
}

function AppControls() {
  return (
    <div className="absolute left-[1847px] top-[10px] flex items-start">
      <svg width="9" height="11" viewBox="0 0 9 11"><path d="M0 9H8" stroke="#102a44" strokeWidth="2" /></svg>
      <svg className="ml-[16px]" width="11" height="11" viewBox="0 0 11 11">
        <path d="M3 2.5H10V7" fill="none" stroke="#102a44" strokeWidth="1.4" />
        <rect x="0.8" y="4.2" width="6.5" height="6" fill="none" stroke="#102a44" strokeWidth="1.5" />
      </svg>
      <svg className="ml-[14px]" width="11" height="11" viewBox="0 0 11 11"><path d="M1 1L10 10M10 1L1 10" stroke="#102a44" strokeWidth="1.5" /></svg>
    </div>
  );
}

export default function App() {
  return (
    <div className="relative w-[1920px] h-[1040px] bg-white overflow-hidden">
      <MainApp />
      <AppControls />
      <TestMem />
      <ZenTimings />
      <HwInfo />
      <GhostPopup />
    </div>
  );
}
